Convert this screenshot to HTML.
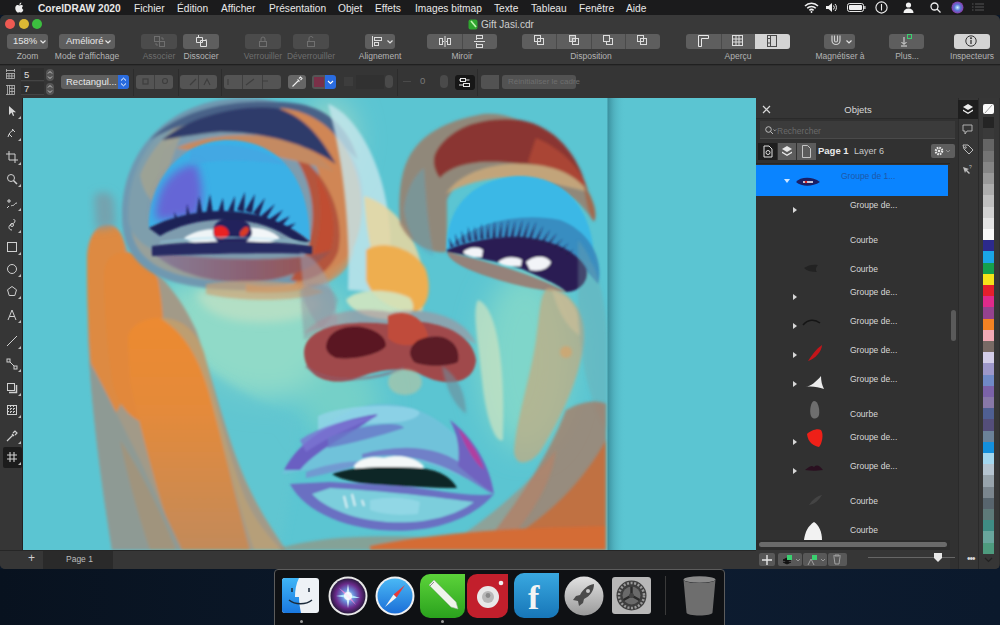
<!DOCTYPE html>
<html><head><meta charset="utf-8">
<style>
*{margin:0;padding:0;box-sizing:border-box}
html,body{width:1000px;height:625px;overflow:hidden;background:#0b1829;font-family:"Liberation Sans",sans-serif;}
.a{position:absolute}
#menubar{left:0;top:0;width:1000px;height:15px;background:#1b1b1c;color:#e8e8e8;font-size:10.2px;}
#menubar span{position:absolute;top:2.6px;white-space:nowrap}
#win{left:0;top:15px;width:1000px;height:554px;background:#2e2e2e;border-radius:6px 6px 5px 5px;overflow:hidden}
#toolbar{left:0;top:0;width:1000px;height:50px;background:#393939;border-bottom:1px solid #202020}
.btn{position:absolute;top:19px;height:15px;background:#5e5e5e;border-radius:3px}
.lbl{position:absolute;top:36px;font-size:8.5px;color:#b4b4b4;white-space:nowrap;text-align:center}
.dis{background:#4b4b4b}
#propbar{left:0;top:51px;width:1000px;height:32px;background:#353535}
#toolbox{left:0;top:83px;width:23px;height:452px;background:#363636}
#canvas{left:23px;top:83px;width:733px;height:452px;background:#5cc5d2;overflow:hidden}
#pagebar{left:0;top:535px;width:756px;height:19px;background:#363636}
#panel{left:756px;top:83px;width:202px;height:471px;background:#313131}
#strip{left:958px;top:83px;width:21px;height:471px;background:#363636}
#palette{left:979px;top:83px;width:20px;height:471px;background:#363636}
.row{position:absolute;left:0;width:192px;height:29px}
.rt{position:absolute;font-size:8.5px;color:#dcdcdc;white-space:nowrap}
</style></head><body>
<div id="menubar" class="a">
<svg style="position:absolute;left:14px;top:2px" width="10" height="11" viewBox="0 0 170 200"><path fill="#eeeeee" d="M150 160c-8 17-12 25-22 40-14 21-34 47-59 47h0c-21 0-27-14-55-14S-13 247-34 247" transform="translate(0,-60)" opacity="0"/><path fill="#eeeeee" d="M140.6 106.3c-.2-23 18.8-34 19.6-34.6-10.7-15.6-27.3-17.8-33.2-18-14.1-1.4-27.6 8.3-34.7 8.3-7.2 0-18.2-8.1-30-7.9-15.4.2-29.7 9-37.6 22.8-16 27.8-4.1 69 11.5 91.6 7.6 11 16.7 23.4 28.6 23 11.5-.5 15.8-7.4 29.7-7.4 13.8 0 17.8 7.4 29.9 7.2 12.4-.2 20.2-11.2 27.7-22.3 8.8-12.8 12.4-25.2 12.6-25.9-.3-.1-24-9.2-24.1-36.8zM118.3 38.7c6.3-7.7 10.6-18.3 9.4-28.9-9.1.4-20.1 6-26.6 13.7-5.8 6.8-11 17.6-9.6 28 10.2.8 20.5-5.1 26.8-12.8z"/></svg>
<span style="left:38px;font-weight:bold">CorelDRAW 2020</span>
<span style="left:134px">Fichier</span>
<span style="left:177px">Édition</span>
<span style="left:221px">Afficher</span>
<span style="left:269px">Présentation</span>
<span style="left:338px">Objet</span>
<span style="left:375px">Effets</span>
<span style="left:415px">Images bitmap</span>
<span style="left:494px">Texte</span>
<span style="left:531px">Tableau</span>
<span style="left:579px">Fenêtre</span>
<span style="left:626px">Aide</span>
<svg style="position:absolute;left:804px;top:2px" width="15" height="11" viewBox="0 0 15 11" fill="none" stroke="#f0f0f0" stroke-width="1.5"><path d="M1 4a9 9 0 0 1 13 0M3.2 6.2a6 6 0 0 1 8.6 0M5.4 8.4a3 3 0 0 1 4.2 0"/><circle cx="7.5" cy="10" r="0.9" fill="#f0f0f0" stroke="none"/></svg>
<svg style="position:absolute;left:825px;top:2px" width="13" height="11" viewBox="0 0 13 11"><path d="M1 4h2.5L7 1v9L3.5 7H1z" fill="#f0f0f0"/><path d="M8.5 3.5a3 3 0 0 1 0 4M10 2a5 5 0 0 1 0 7" fill="none" stroke="#f0f0f0" stroke-width="1"/></svg>
<svg style="position:absolute;left:847px;top:3px" width="19" height="9" viewBox="0 0 19 9"><rect x="0.5" y="0.5" width="16" height="8" rx="2" fill="none" stroke="#e8e8e8" stroke-width="1"/><rect x="2" y="2" width="13" height="5" rx="1" fill="#f0f0f0"/><rect x="17.3" y="3" width="1.2" height="3" fill="#e8e8e8"/></svg>
<svg style="position:absolute;left:875px;top:1px" width="13" height="13" viewBox="0 0 13 13" fill="none" stroke="#f0f0f0" stroke-width="1.1"><circle cx="6.5" cy="6.5" r="5.6"/><path d="M6.5 3v6.5"/></svg>
<svg style="position:absolute;left:903px;top:2px" width="11" height="11" viewBox="0 0 11 11" fill="#f4f4f4"><circle cx="5.5" cy="3" r="2.6"/><path d="M0.5 11c0-3 2-4.5 5-4.5s5 1.5 5 4.5z"/></svg>
<svg style="position:absolute;left:930px;top:2px" width="11" height="11" viewBox="0 0 11 11" fill="none" stroke="#f0f0f0" stroke-width="1.3"><circle cx="4.5" cy="4.5" r="3.5"/><path d="M7 7l3.5 3.5"/></svg>
<svg style="position:absolute;left:951px;top:1px" width="13" height="13" viewBox="0 0 13 13"><defs><radialGradient id="siriM" cx="0.5" cy="0.5" r="0.5"><stop offset="0" stop-color="#d0f4ff"/><stop offset="0.5" stop-color="#5a7ad8"/><stop offset="1" stop-color="#8a3aa8"/></radialGradient></defs><circle cx="6.5" cy="6.5" r="6" fill="url(#siriM)"/></svg>
<svg style="position:absolute;left:972px;top:3px" width="12" height="10" viewBox="0 0 12 10" fill="none" stroke="#555" stroke-width="1"><path d="M3 1h9M3 4h9M3 7h9M0 1h1.5M0 4h1.5M0 7h1.5"/></svg>
</div>
<div id="win" class="a">
 <div id="toolbar" class="a">
  <div class="a" style="left:5px;top:4px;width:10px;height:10px;border-radius:50%;background:#ee5a52"></div>
  <div class="a" style="left:19px;top:4px;width:10px;height:10px;border-radius:50%;background:#dcb834"></div>
  <div class="a" style="left:32px;top:4px;width:10px;height:10px;border-radius:50%;background:#3cbf3f"></div>
  <svg class="a" style="left:468px;top:4px" width="10" height="11" viewBox="0 0 10 11"><rect x="0.5" y="0.5" width="9" height="10" rx="2" fill="#2fa52f"/><path d="M3 2 L8 8" stroke="#bff5b0" stroke-width="1.6"/></svg>
  <div class="a" style="left:481px;top:4px;font-size:10px;color:#cfcfcf">Gift Jasi.cdr</div>
  <!-- zoom -->
  <div class="btn" style="left:7px;width:41px;color:#e6e6e6;font-size:9.5px;padding:1px 0 0 6px">158%<svg style="position:absolute;left:33px;top:6px" width="6" height="4" viewBox="0 0 6 4" fill="none" stroke="#e6e6e6" stroke-width="1.2"><path d="M0.5 0.5L3 3L5.5 0.5"/></svg></div>
  <div class="lbl" style="left:7px;width:41px">Zoom</div>
  <div class="btn" style="left:59px;width:56px;color:#e6e6e6;font-size:9.5px;padding:1px 0 0 7px">Amélioré<svg style="position:absolute;left:46px;top:6px" width="6" height="4" viewBox="0 0 6 4" fill="none" stroke="#e6e6e6" stroke-width="1.2"><path d="M0.5 0.5L3 3L5.5 0.5"/></svg></div>
  <div class="lbl" style="left:52px;width:70px">Mode d'affichage</div>
  <div class="btn dis" style="left:141px;width:36px"></div>
  <div class="lbl" style="left:141px;width:36px;color:#6e6e6e">Associer</div>
  <div class="btn" style="left:183px;width:36px"></div>
  <div class="lbl" style="left:179px;width:44px">Dissocier</div>
  <div class="btn dis" style="left:245px;width:36px"></div>
  <div class="lbl" style="left:240px;width:46px;color:#6e6e6e">Verrouiller</div>
  <div class="btn dis" style="left:293px;width:36px"></div>
  <div class="lbl" style="left:285px;width:52px;color:#6e6e6e">Déverrouiller</div>
  <div class="btn" style="left:365px;width:30px"></div>
  <div class="lbl" style="left:350px;width:60px">Alignement</div>
  <div class="btn" style="left:427px;width:70px"></div>
  <div class="a" style="left:462px;top:19px;width:1px;height:15px;background:#4a4a4a"></div>
  <div class="lbl" style="left:427px;width:70px">Miroir</div>
  <div class="btn" style="left:522px;width:138px"></div>
  <div class="a" style="left:556px;top:19px;width:1px;height:15px;background:#4a4a4a"></div>
  <div class="a" style="left:591px;top:19px;width:1px;height:15px;background:#4a4a4a"></div>
  <div class="a" style="left:625px;top:19px;width:1px;height:15px;background:#4a4a4a"></div>
  <div class="lbl" style="left:522px;width:138px">Disposition</div>
  <div class="btn" style="left:686px;width:104px"></div>
  <div class="a" style="left:721px;top:19px;width:1px;height:15px;background:#4a4a4a"></div>
  <div class="a" style="left:755px;top:19px;width:35px;height:15px;background:#d4d4d4;border-radius:0 3px 3px 0"></div>
  <div class="lbl" style="left:686px;width:104px">Aperçu</div>
  <div class="btn" style="left:824px;width:31px"></div>
  <div class="lbl" style="left:805px;width:70px">Magnétiser à</div>
  <div class="btn" style="left:889px;width:35px"></div>
  <div class="lbl" style="left:880px;width:54px">Plus...</div>
  <div class="btn" style="left:954px;width:36px;background:#d4d4d4"></div>
  <div class="lbl" style="left:940px;width:64px">Inspecteurs</div>
  <svg class="a" style="left:154px;top:21px" width="11" height="11" viewBox="0 0 11 11" fill="none" stroke="#6f6f6f" stroke-width="1"><rect x="0.5" y="0.5" width="5" height="5"/><rect x="5.5" y="5.5" width="5" height="5"/><path d="M2 7v2h2M7 2h2v2"/></svg>
  <svg class="a" style="left:196px;top:20px" width="12" height="12" viewBox="0 0 12 12" fill="none" stroke="#e0e0e0" stroke-width="1"><path d="M0.5 2.5h6v5h-6z M4.5 5.5h6v6h-6z M2.5 0v2 M10 4v1.5"/></svg>
  <svg class="a" style="left:258px;top:21px" width="10" height="11" viewBox="0 0 10 11" fill="none" stroke="#707070" stroke-width="1"><rect x="1.5" y="5.5" width="7" height="5"/><path d="M3 5V3a2 2 0 0 1 4 0v2"/></svg>
  <svg class="a" style="left:306px;top:21px" width="10" height="11" viewBox="0 0 10 11" fill="none" stroke="#707070" stroke-width="1"><rect x="1.5" y="5.5" width="7" height="5"/><path d="M3 5V3a2 2 0 0 1 4 -1"/></svg>
  <svg class="a" style="left:371px;top:21px" width="12" height="11" viewBox="0 0 12 11" fill="none" stroke="#dcdcdc" stroke-width="1"><path d="M1.5 0v11"/><rect x="3.5" y="1.5" width="7" height="3"/><rect x="3.5" y="6.5" width="4" height="3"/></svg>
  <svg class="a" style="left:387px;top:25px" width="6" height="4" viewBox="0 0 6 4" fill="none" stroke="#e0e0e0" stroke-width="1.2"><path d="M0.5 0.5L3 3L5.5 0.5"/></svg>
  <svg class="a" style="left:439px;top:21px" width="12" height="11" viewBox="0 0 12 11" fill="none" stroke="#dcdcdc" stroke-width="1"><path d="M6 0v11"/><rect x="0.5" y="2.5" width="3" height="6"/><rect x="8.5" y="2.5" width="3" height="6"/><path d="M4 5.5h1M7 5.5h1"/></svg>
  <svg class="a" style="left:474px;top:20px" width="11" height="13" viewBox="0 0 11 13" fill="none" stroke="#dcdcdc" stroke-width="1"><path d="M0 6.5h11"/><rect x="2.5" y="0.5" width="6" height="3"/><rect x="2.5" y="9.5" width="6" height="3"/><path d="M2.5 4v1M2.5 8v1"/></svg>
  <svg class="a" style="left:534px;top:20px" width="11" height="11" viewBox="0 0 11 11" fill="none" stroke="#dcdcdc" stroke-width="1"><rect x="0.5" y="0.5" width="6" height="6"/><rect x="3.5" y="3.5" width="6" height="6"/></svg>
  <svg class="a" style="left:569px;top:20px" width="11" height="11" viewBox="0 0 11 11" fill="none" stroke="#dcdcdc" stroke-width="1"><rect x="0.5" y="0.5" width="6" height="6" fill="#8a8a8a"/><rect x="3.5" y="3.5" width="6" height="6"/></svg>
  <svg class="a" style="left:603px;top:20px" width="11" height="11" viewBox="0 0 11 11" fill="none" stroke="#dcdcdc" stroke-width="1"><rect x="3.5" y="3.5" width="6" height="6"/><rect x="0.5" y="0.5" width="6" height="6" fill="#5e5e5e"/></svg>
  <svg class="a" style="left:637px;top:20px" width="11" height="11" viewBox="0 0 11 11" fill="none" stroke="#dcdcdc" stroke-width="1"><rect x="3.5" y="3.5" width="6" height="6" fill="#5e5e5e"/><rect x="0.5" y="0.5" width="6" height="6"/></svg>
  <svg class="a" style="left:698px;top:20px" width="11" height="12" viewBox="0 0 11 12" fill="none" stroke="#e8e8e8" stroke-width="1"><path d="M0.5 11.5V0.5h10v3h-7v8z"/></svg>
  <svg class="a" style="left:732px;top:20px" width="11" height="11" viewBox="0 0 11 11" fill="none" stroke="#e0e0e0" stroke-width="1"><rect x="0.5" y="0.5" width="10" height="10"/><path d="M4 0v11M7 0v11M0 4h11M0 7h11"/></svg>
  <svg class="a" style="left:767px;top:20px" width="10" height="12" viewBox="0 0 10 12" fill="none" stroke="#4a4a4a" stroke-width="1"><rect x="0.5" y="0.5" width="9" height="11"/><path d="M3.5 0v12M0 3.5h3M0 8h3"/></svg>
  <svg class="a" style="left:830px;top:20px" width="12" height="11" viewBox="0 0 12 11" fill="none" stroke="#cfcfcf" stroke-width="1.2"><path d="M2 0.5v5a4 4 0 0 0 8 0v-5M4.5 0.5v5a1.5 1.5 0 0 0 3 0v-5"/></svg>
  <svg class="a" style="left:846px;top:25px" width="6" height="4" viewBox="0 0 6 4" fill="none" stroke="#e0e0e0" stroke-width="1.2"><path d="M0.5 0.5L3 3L5.5 0.5"/></svg>
  <svg class="a" style="left:900px;top:19px" width="13" height="13" viewBox="0 0 13 13" fill="none" stroke-width="1"><path d="M4 3v7M1.5 8l2.5 2.5L6.5 8M1 12h6" stroke="#e0e0e0"/><rect x="7.5" y="0.5" width="4" height="4" stroke="#3cd070"/></svg>
  <svg class="a" style="left:965px;top:20px" width="12" height="12" viewBox="0 0 12 12" fill="none" stroke="#333" stroke-width="1"><circle cx="6" cy="6" r="5.2"/><path d="M6 5v4" stroke-width="1.3"/><circle cx="6" cy="3.2" r="0.6" fill="#333"/></svg>
 </div>
 <div id="propbar" class="a">
  <svg class="a" style="left:6px;top:3px" width="9" height="10" viewBox="0 0 9 10" fill="none" stroke="#bdbdbd" stroke-width="0.8"><path d="M0.5 1.5h8M0.5 0v3M8.5 0v3"/><rect x="0.5" y="4.5" width="8" height="5"/><path d="M3 4.5v5M5.8 4.5v5M0.5 7h8"/></svg>
  <svg class="a" style="left:6px;top:19px" width="9" height="10" viewBox="0 0 9 10" fill="none" stroke="#bdbdbd" stroke-width="0.8"><path d="M1.5 0.5v9M0 0.5h3M0 9.5h3"/><rect x="3.5" y="0.5" width="5" height="9"/><path d="M3.5 3.5h5M3.5 6.5h5M6 0.5v9"/></svg>
  <div class="a" style="left:21px;top:2px;width:23px;height:13px;background:#2f2f2f;border-bottom:1px solid #444;color:#e0e0e0;font-size:9.5px;padding:1px 0 0 3px">5</div>
  <div class="a" style="left:21px;top:16px;width:23px;height:13px;background:#2f2f2f;border-bottom:1px solid #444;color:#e0e0e0;font-size:9.5px;padding:1px 0 0 3px">7</div>
  <div class="a" style="left:46px;top:3px;width:8px;height:12px;background:#555;border-radius:4px"></div>
  <div class="a" style="left:46px;top:17px;width:8px;height:12px;background:#555;border-radius:4px"></div>
  <svg class="a" style="left:47px;top:4px" width="6" height="10" viewBox="0 0 6 10" fill="none" stroke="#cfcfcf" stroke-width="0.9"><path d="M1 3.5L3 1.5L5 3.5M1 6.5L3 8.5L5 6.5"/></svg>
  <svg class="a" style="left:47px;top:18px" width="6" height="10" viewBox="0 0 6 10" fill="none" stroke="#cfcfcf" stroke-width="0.9"><path d="M1 3.5L3 1.5L5 3.5M1 6.5L3 8.5L5 6.5"/></svg>
  <div class="a" style="left:61px;top:9px;width:68px;height:14px;background:#5f5f5f;border-radius:3px;color:#e8e8e8;font-size:9.5px;padding:1px 0 0 5px;white-space:nowrap">Rectangul...</div>
  <div class="a" style="left:118px;top:9px;width:11px;height:14px;background:#2a6ce0;border-radius:0 3px 3px 0"></div>
  <svg class="a" style="left:120px;top:11px" width="7" height="10" viewBox="0 0 7 10" fill="none" stroke="#fff" stroke-width="1"><path d="M1 3.5L3.5 1.2L6 3.5M1 6.5L3.5 8.8L6 6.5"/></svg>
  <div class="a" style="left:133px;top:3px;width:1px;height:27px;background:#2c2c2c"></div>
  <div class="a" style="left:136px;top:9px;width:37px;height:14px;background:#545454;border-radius:3px"></div>
  <div class="a" style="left:154px;top:9px;width:1px;height:14px;background:#404040"></div>
  <div class="a" style="left:178px;top:3px;width:1px;height:27px;background:#2c2c2c"></div>
  <div class="a" style="left:180px;top:9px;width:37px;height:14px;background:#545454;border-radius:3px"></div>
  <div class="a" style="left:198px;top:9px;width:1px;height:14px;background:#404040"></div>
  <div class="a" style="left:221px;top:3px;width:1px;height:27px;background:#2c2c2c"></div>
  <div class="a" style="left:224px;top:9px;width:57px;height:14px;background:#545454;border-radius:3px"></div>
  <div class="a" style="left:242px;top:9px;width:1px;height:14px;background:#404040"></div>
  <div class="a" style="left:262px;top:9px;width:1px;height:14px;background:#404040"></div>
  <svg class="a" style="left:140px;top:11px" width="130" height="10" viewBox="0 0 130 10" fill="none" stroke="#3e3e3e" stroke-width="1.2"><rect x="3" y="2" width="5" height="5"/><circle cx="25" cy="4" r="2.5"/><path d="M50 8L56 2M64 8l3-6 3 6M88 2v6M106 8l8-6M122 4h6"/></svg>
  <div class="a" style="left:288px;top:9px;width:18px;height:14px;background:#666;border-radius:3px"></div>
  <svg class="a" style="left:291px;top:10px" width="12" height="12" viewBox="0 0 12 12" fill="none" stroke="#eee" stroke-width="1.1"><path d="M1.5 10.5L7.5 4.5M8 2.5l1.5 -1.5l1.5 1.5l-1.5 1.5M6.5 3.5l2 2"/></svg>
  <div class="a" style="left:312px;top:9px;width:13px;height:14px;background:#555;border-radius:3px 0 0 3px"></div>
  <div class="a" style="left:314px;top:11px;width:10px;height:10px;background:#7a3048"></div>
  <div class="a" style="left:325px;top:9px;width:11px;height:14px;background:#2a6ce0;border-radius:0 3px 3px 0"></div>
  <svg class="a" style="left:327px;top:14px" width="7" height="5" viewBox="0 0 7 5" fill="none" stroke="#fff" stroke-width="1.1"><path d="M1 1L3.5 3.5L6 1"/></svg>
  <div class="a" style="left:344px;top:11px;width:9px;height:9px;background:#3d3d3d"></div>
  <div class="a" style="left:356px;top:9px;width:28px;height:14px;background:#313131"></div>
  <div class="a" style="left:385px;top:9px;width:8px;height:13px;background:#4a4a4a;border-radius:4px"></div>
  <div class="a" style="left:397px;top:3px;width:1px;height:27px;background:#2c2c2c"></div>
  <div class="a" style="left:403px;top:15px;width:8px;height:1px;background:#4a4a4a"></div>
  <div class="a" style="left:420px;top:9px;font-size:9.5px;color:#7a7a7a">0</div>
  <div class="a" style="left:440px;top:9px;width:8px;height:13px;background:#4a4a4a;border-radius:4px"></div>
  <div class="a" style="left:455px;top:9px;width:20px;height:15px;background:#171717;border-radius:3px"></div>
  <svg class="a" style="left:459px;top:11px" width="12" height="11" viewBox="0 0 12 11" fill="none" stroke="#e8e8e8" stroke-width="1"><rect x="1.5" y="1.5" width="5" height="3"/><rect x="4.5" y="6.5" width="6" height="3"/><path d="M0 3h1.5M6.5 3h4M0 8h4.5"/></svg>
  <div class="a" style="left:477px;top:3px;width:1px;height:27px;background:#2c2c2c"></div>
  <div class="a" style="left:481px;top:9px;width:18px;height:14px;background:#525252;border-radius:3px 0 0 3px"></div>
  <div class="a" style="left:502px;top:9px;width:74px;height:14px;background:#525252;border-radius:3px;font-size:8px;color:#6e6e6e;padding:2px 0 0 6px;white-space:nowrap">Réinitialiser le cadre</div>
 </div>
 <div id="toolbox" class="a">
<div class="a" style="left:3px;top:349px;width:19px;height:21px;background:#1c1c1c;border-radius:2px"></div>
<svg class="a" style="left:6px;top:7px" width="12" height="12" viewBox="0 0 12 12" fill="none" stroke="#d0d0d0" stroke-width="1"><path d="M3 1v9l2.5-2.5L7 11l1.2-.6L6.8 7.2H10z" fill="#d8d8d8" stroke="none"/></svg>
<div class="a" style="left:18px;top:18px;width:0;height:0;border-left:3px solid transparent;border-bottom:3px solid #bbb"></div>
<svg class="a" style="left:6px;top:29px" width="12" height="12" viewBox="0 0 12 12" fill="none" stroke="#d0d0d0" stroke-width="1"><path d="M2 10c1-4 3-6 6-7M6 2l3 3M3 7l3 3" /></svg>
<div class="a" style="left:18px;top:40px;width:0;height:0;border-left:3px solid transparent;border-bottom:3px solid #bbb"></div>
<svg class="a" style="left:6px;top:53px" width="12" height="12" viewBox="0 0 12 12" fill="none" stroke="#d0d0d0" stroke-width="1"><path d="M3 0v9h9M0 3h9v9" /></svg>
<div class="a" style="left:18px;top:64px;width:0;height:0;border-left:3px solid transparent;border-bottom:3px solid #bbb"></div>
<svg class="a" style="left:6px;top:75px" width="12" height="12" viewBox="0 0 12 12" fill="none" stroke="#d0d0d0" stroke-width="1"><circle cx="5" cy="5" r="3.5"/><path d="M7.5 7.5l3.5 3.5" stroke-width="1.5"/></svg>
<div class="a" style="left:18px;top:86px;width:0;height:0;border-left:3px solid transparent;border-bottom:3px solid #bbb"></div>
<svg class="a" style="left:6px;top:99px" width="12" height="12" viewBox="0 0 12 12" fill="none" stroke="#d0d0d0" stroke-width="1"><path d="M1 11l2-2M3 2v4M1 4h4M5 9c1-1 2 0 3-1s1-2 3-2" /></svg>
<div class="a" style="left:18px;top:110px;width:0;height:0;border-left:3px solid transparent;border-bottom:3px solid #bbb"></div>
<svg class="a" style="left:6px;top:121px" width="12" height="12" viewBox="0 0 12 12" fill="none" stroke="#d0d0d0" stroke-width="1"><path d="M6 11c-3 0-4-3-2-5s5-1 5-4c0-1-1-2-2-2" /><circle cx="6" cy="6" r="1.5"/></svg>
<div class="a" style="left:18px;top:132px;width:0;height:0;border-left:3px solid transparent;border-bottom:3px solid #bbb"></div>
<svg class="a" style="left:6px;top:143px" width="12" height="12" viewBox="0 0 12 12" fill="none" stroke="#d0d0d0" stroke-width="1"><rect x="1.5" y="1.5" width="9" height="9"/></svg>
<div class="a" style="left:18px;top:154px;width:0;height:0;border-left:3px solid transparent;border-bottom:3px solid #bbb"></div>
<svg class="a" style="left:6px;top:165px" width="12" height="12" viewBox="0 0 12 12" fill="none" stroke="#d0d0d0" stroke-width="1"><circle cx="6" cy="6" r="4.5"/></svg>
<div class="a" style="left:18px;top:176px;width:0;height:0;border-left:3px solid transparent;border-bottom:3px solid #bbb"></div>
<svg class="a" style="left:6px;top:187px" width="12" height="12" viewBox="0 0 12 12" fill="none" stroke="#d0d0d0" stroke-width="1"><path d="M6 1.5l4.5 3.3-1.7 5.7H3.2L1.5 4.8z"/></svg>
<div class="a" style="left:18px;top:198px;width:0;height:0;border-left:3px solid transparent;border-bottom:3px solid #bbb"></div>
<svg class="a" style="left:6px;top:211px" width="12" height="12" viewBox="0 0 12 12" fill="none" stroke="#d0d0d0" stroke-width="1"><path d="M2 11L6 1l4 10M3.5 7.5h5" /></svg>
<div class="a" style="left:18px;top:222px;width:0;height:0;border-left:3px solid transparent;border-bottom:3px solid #bbb"></div>
<svg class="a" style="left:6px;top:237px" width="12" height="12" viewBox="0 0 12 12" fill="none" stroke="#d0d0d0" stroke-width="1"><path d="M1 11L11 1" /></svg>
<div class="a" style="left:18px;top:248px;width:0;height:0;border-left:3px solid transparent;border-bottom:3px solid #bbb"></div>
<svg class="a" style="left:6px;top:260px" width="12" height="12" viewBox="0 0 12 12" fill="none" stroke="#d0d0d0" stroke-width="1"><rect x="1" y="1" width="3" height="3"/><rect x="8" y="8" width="3" height="3"/><path d="M4 4l4 4"/></svg>
<div class="a" style="left:18px;top:271px;width:0;height:0;border-left:3px solid transparent;border-bottom:3px solid #bbb"></div>
<svg class="a" style="left:6px;top:284px" width="12" height="12" viewBox="0 0 12 12" fill="none" stroke="#d0d0d0" stroke-width="1"><rect x="1.5" y="1.5" width="7" height="7"/><path d="M10.5 3v7.5H3" stroke-width="1.5"/></svg>
<div class="a" style="left:18px;top:295px;width:0;height:0;border-left:3px solid transparent;border-bottom:3px solid #bbb"></div>
<svg class="a" style="left:6px;top:306px" width="12" height="12" viewBox="0 0 12 12" fill="none" stroke="#d0d0d0" stroke-width="1"><rect x="1.5" y="1.5" width="9" height="9"/><path d="M1.5 4.5h9M1.5 7.5h9M4.5 1.5v9M7.5 1.5v9" stroke-dasharray="1.5 1.5"/></svg>
<div class="a" style="left:18px;top:317px;width:0;height:0;border-left:3px solid transparent;border-bottom:3px solid #bbb"></div>
<svg class="a" style="left:6px;top:332px" width="12" height="12" viewBox="0 0 12 12" fill="none" stroke="#d0d0d0" stroke-width="1"><path d="M1 11l6-6M7 3l2-2 2 2-2 2M6 4l2 2" stroke-width="1.2"/></svg>
<div class="a" style="left:18px;top:343px;width:0;height:0;border-left:3px solid transparent;border-bottom:3px solid #bbb"></div>
<svg class="a" style="left:6px;top:353px" width="12" height="12" viewBox="0 0 12 12" fill="none" stroke="#d0d0d0" stroke-width="1"><path d="M4 1v10M8 1v10M1 4h10M1 8h10" stroke-width="1.1"/></svg>
<div class="a" style="left:18px;top:364px;width:0;height:0;border-left:3px solid transparent;border-bottom:3px solid #bbb"></div>

<div class="a" style="left:22px;top:0;width:1px;height:452px;background:#222"></div>
</div>
 <div id="canvas" class="a"><svg class="a" style="left:0;top:0" width="733" height="452" viewBox="23 98 733 452">
<defs>
 <filter id="b1" x="-20%" y="-20%" width="140%" height="140%"><feGaussianBlur stdDeviation="0.8"/></filter>
 <filter id="b2" x="-20%" y="-20%" width="140%" height="140%"><feGaussianBlur stdDeviation="1.6"/></filter>
 <filter id="b4" x="-30%" y="-30%" width="160%" height="160%"><feGaussianBlur stdDeviation="4"/></filter>
 <filter id="b8" x="-50%" y="-50%" width="200%" height="200%"><feGaussianBlur stdDeviation="14"/></filter>
 <linearGradient id="shadow" x1="0" x2="1"><stop offset="0" stop-color="#3a8e9c" stop-opacity="1"/><stop offset="0.35" stop-color="#4aa8b6" stop-opacity="0.7"/><stop offset="1" stop-color="#5bc5d2" stop-opacity="0"/></linearGradient>
 <linearGradient id="under1" x1="0" x2="1"><stop offset="0" stop-color="#86809a"/><stop offset="0.55" stop-color="#8a6072"/><stop offset="1" stop-color="#9e5248"/></linearGradient>
 <linearGradient id="orblob" x1="0" y1="0" x2="0" y2="1"><stop offset="0" stop-color="#ec8a30"/><stop offset="0.4" stop-color="#e48a3a"/><stop offset="1" stop-color="#c28a5a"/></linearGradient>
 <linearGradient id="orcol" x1="0" y1="0" x2="0.3" y2="1"><stop offset="0" stop-color="#ec8a2e"/><stop offset="1" stop-color="#d88a44"/></linearGradient>
</defs>
<rect x="23" y="98" width="733" height="452" fill="#5bc5d2"/>
<!-- page shadow -->
<rect x="607.5" y="98" width="18" height="452" fill="url(#shadow)"/>

<!-- face base mint -->
<g filter="url(#b8)">
 <path d="M160 290 C200 270 300 270 340 300 C350 340 330 390 280 400 C230 405 190 380 170 350 Z" fill="#90dac8"/>
 <ellipse cx="340" cy="400" rx="40" ry="40" fill="#74d0c8"/>
 <ellipse cx="525" cy="360" rx="45" ry="90" fill="#7fd6ca"/>
 <ellipse cx="330" cy="140" rx="25" ry="40" fill="#9ad6c8"/>
</g>

<g filter="url(#b4)">
 <path d="M196 292 C230 286 290 290 322 300 C318 316 290 324 250 322 C220 320 200 310 196 292 Z" fill="#bfe0c4" opacity="0.75"/>
 <path d="M196 360 C220 380 250 400 300 420 C300 460 290 500 280 550 L240 550 C230 480 215 410 196 360 Z" fill="#62c6d0" opacity="0.7"/>
</g>
<!-- orange left column -->
<g filter="url(#b2)">
 <path d="M87 260 C87 236 96 224 108 224 C118 224 124 236 128 252 C150 262 178 290 196 330 C214 380 226 440 250 490 C262 515 276 535 286 550 L112 550 C104 500 92 420 88 340 Z" fill="#a29a88"/>
 <path d="M87 262 C87 238 96 225 107 225 C120 225 126 240 126 262 L126 380 C124 410 110 424 100 420 C92 400 87 330 87 262 Z" fill="#dd8a42"/>
 <path d="M104 276 C104 258 114 252 126 252 C140 252 152 262 158 280 C166 320 166 380 160 420 C150 430 120 420 112 380 C106 340 104 300 104 276 Z" fill="#e2883a"/>
 <path d="M128 340 C128 326 144 318 160 318 C180 318 196 330 202 350 C212 400 228 470 250 550 L176 550 C160 500 140 430 130 380 Z" fill="url(#orblob)"/>
 <path d="M160 318 C180 318 196 330 204 352 C214 390 226 450 246 500 C258 525 272 540 282 550 L254 550 C236 500 222 440 208 390 C196 350 180 330 160 318 Z" fill="#b8a078" opacity="0.9"/>
 <path d="M89 360 C100 380 120 420 140 460 C156 495 170 525 182 550 L112 550 C104 500 94 430 89 360 Z" fill="#8e9a94"/>
 <path d="M120 440 C140 470 160 510 176 550 L150 550 C140 520 128 480 120 440 Z" fill="#a89274" opacity="0.7"/>
 
</g>

<g filter="url(#b4)"><path d="M94 196 C100 190 110 190 114 200 L116 226 L96 230 Z" fill="#7a9aa6" opacity="0.8"/></g>
<!-- left eye socket ring -->
<g filter="url(#b2)">
 <path d="M122 220 C120 150 170 100 240 98 C306 96 362 140 363 196 C364 252 322 290 238 290 C166 288 124 272 122 220 Z" fill="#6f98b0"/>
 <path d="M130 220 C128 156 174 108 240 106 C300 104 352 144 354 196 C356 248 318 282 238 282 C172 280 132 266 130 220 Z" fill="#98a09a"/>
 <path d="M140 220 C138 162 180 118 240 116 C296 114 342 150 344 198 C346 244 312 274 238 274 C178 272 142 260 140 220 Z" fill="#7e9cae"/>
 <path d="M128 216 C128 170 150 135 180 118 C160 150 150 190 154 250 C140 244 128 232 128 216 Z" fill="#7e9eac"/>
 <path d="M140 175 C150 150 170 128 190 118 C175 145 165 175 160 210 C150 200 142 190 140 175 Z" fill="#a4a290" opacity="0.8"/>
 <path d="M150 140 C180 108 240 96 300 104 C330 110 350 130 358 160 C330 130 290 115 240 116 C200 118 170 128 150 140 Z" fill="#4a6288"/>
 <path d="M280 108 C330 112 362 156 362 210 C360 258 330 290 290 288 C330 250 336 180 300 140 C294 128 288 118 280 108 Z" fill="#d08654"/>
 <path d="M290 150 C326 170 346 214 338 252 C328 276 306 284 290 280 C318 244 322 192 290 150 Z" fill="#b4553c"/>
 <path d="M316 176 C332 196 338 226 330 252 C322 262 316 262 312 258 C322 232 322 204 316 176 Z" fill="#c44c2c" opacity="0.7"/>
 <path d="M176 148 C210 132 270 130 302 146 C318 154 328 164 334 172 C300 160 250 150 210 150 C196 150 186 151 176 148 Z" fill="#c48a62"/>
 <path d="M162 140 C190 116 240 104 276 108 C300 114 318 132 336 164 C310 146 270 132 220 132 C196 134 176 138 162 140 Z" fill="#2e3a6a"/>
 <path d="M150 250 C190 292 292 294 332 250 C300 262 210 262 150 250 Z" fill="url(#under1)"/>
 <path d="M246 284 C290 292 334 276 354 248 C350 282 312 296 246 292 Z" fill="#c89060" opacity="0.85"/>
</g>
<!-- left eyelid -->
<g filter="url(#b1)">
 <path d="M149 228 C148 180 182 140 228 140 C274 140 310 172 310 242 C280 214 200 208 149 228 Z" fill="#3ab0e6"/>
 </g><g filter="url(#b4)"><path d="M156 220 C154 196 166 168 196 164 C204 186 204 206 196 216 C180 218 168 220 156 220 Z" fill="#6a5ed4" opacity="0.9"/></g><g filter="url(#b1)">
 <path d="M190 150 C220 140 260 145 285 165 C260 160 220 158 190 165 Z" fill="#4aa0e0" opacity="0.5"/>
</g>
<!-- left eye -->
<g filter="url(#b1)">
 <path d="M184 238 C196 230 210 228 220 230 L222 244 C206 246 192 244 184 238 Z" fill="#eef4f6"/><path d="M244 228 C258 226 272 230 280 238 C268 244 254 246 244 244 Z" fill="#f2f6f8"/>
 <path d="M213 232 C213 222 222 218 232 218 C244 218 252 224 252 234 C248 243 240 246 232 246 C222 246 214 242 213 232 Z" fill="#24205c"/>
 <path d="M214 228 C220 224 228 226 229 234 C226 240 218 240 214 235 Z" fill="#ea2420"/>
 <path d="M240 232 C244 226 249 225 249 230 C247 236 243 238 240 236 Z" fill="#d83a26"/>
 <path d="M149 228 C190 206 262 200 310 242 C300 244 290 238 280 232 C240 212 190 218 160 236 Z" fill="#1e2056"/>
 <path d="M152 246 C200 240 270 240 312 246 L312 254 C270 252 200 254 152 256 Z" fill="#262a62"/>
 <path d="M160 242 C210 236 270 236 310 244" stroke="#9ad8ee" stroke-width="1.2" fill="none" opacity="0.7"/>
 <g fill="#1e2056">
  <path d="M196 218 L199 196 L203 216 Z"/><path d="M206 214 L210 194 L213 214 Z"/><path d="M218 212 L223 198 L224 212 Z"/>
  <path d="M228 211 L235 196 L234 212 Z"/><path d="M237 210 L245 192 L244 212 Z"/><path d="M245 211 L255 194 L252 213 Z"/>
  <path d="M253 213 L265 198 L259 216 Z"/><path d="M261 216 L275 204 L266 219 Z"/><path d="M268 220 L283 210 L273 224 Z"/>
  <path d="M275 224 L290 216 L280 228 Z"/><path d="M282 228 L296 223 L286 232 Z"/><path d="M186 222 L187 204 L191 220 Z"/><path d="M176 226 L174 212 L181 224 Z"/>
 </g>
</g>

<!-- nose bridge light -->
<g filter="url(#b2)">
 <path d="M328 104 C356 114 386 166 390 230 C392 262 386 282 378 292 L348 290 C350 240 346 170 328 104 Z" fill="#c4e6ec" opacity="0.8"/>
 <path d="M364 196 C392 204 420 232 426 290 L422 312 C396 310 370 290 364 196 Z" fill="#ead6a0" opacity="0.85"/>
 <path d="M366 250 C380 240 414 246 426 270 C432 290 428 306 416 312 C396 312 372 300 366 280 Z" fill="#eeae50"/>
 <path d="M346 300 C356 288 390 288 410 298 C418 310 410 318 396 320 C376 320 352 314 346 300 Z" fill="#d2e6c0" opacity="0.9"/>
 <path d="M300 252 C322 258 338 290 338 336 C326 340 312 320 304 300 Z" fill="#9aa0b0" opacity="0.55"/>
 <path d="M206 284 C240 278 300 280 324 292 C300 302 240 302 206 294 Z" fill="#d0a070" opacity="0.65"/>
</g>

<!-- right brow / socket -->
<g filter="url(#b2)">
 <path d="M408 159 C420 135 444 121 483 114 C520 110 560 140 585 185 L593 221 C580 200 556 178 500 174 C470 176 452 186 447 200 L447 252 C430 254 410 244 400 224 C398 198 400 175 408 159 Z" fill="#9c7a66" opacity="0.82"/>
 <path d="M404 210 C406 190 414 176 424 168 C426 200 428 230 434 256 C420 254 408 236 404 210 Z" fill="#5aa8c0" opacity="0.4"/>
 <path d="M436 152 C450 128 480 116 520 120 C556 126 578 156 586 186 C560 170 520 160 480 162 C460 164 446 170 440 178 C434 170 432 160 436 152 Z" fill="#8a3632"/>
 <path d="M536 138 C564 150 582 170 588 190 C570 180 550 170 528 162 Z" fill="#b24a34" opacity="0.8"/>
 <path d="M446 194 C456 178 480 166 510 164 C550 162 576 174 588 192 C560 184 530 178 500 178 C476 180 456 188 446 194 Z" fill="#c2a47a"/>
 <path d="M584 184 C594 200 598 214 594 222 C588 212 585 198 584 184 Z" fill="#a06a50"/>
</g>
<!-- right eyelid -->
<g filter="url(#b1)">
 <path d="M447 254 C444 210 470 180 516 176 C566 174 596 212 594 266 C560 240 490 236 447 254 Z" fill="#3ab8e6"/>
 <path d="M447 250 C470 222 520 212 560 220 C592 232 604 262 598 284 C582 264 560 246 520 240 C490 236 466 240 447 250 Z" fill="#3a88bc" opacity="0.9"/>
</g>
<!-- right eye -->
<g filter="url(#b1)">
 <path d="M447 250 C470 240 500 236 522 237 C552 240 576 250 586 268 C590 280 580 292 566 292 C560 285 540 277 522 269 C500 262 470 256 447 252 Z" fill="#2c1e52"/>
 <path d="M463 252 C468 247 478 246 483 250 L482 257 C474 258 466 256 463 252 Z" fill="#f2f4f8"/>
 <path d="M498 262 C504 256 516 256 522 260 L521 266 C512 267 502 266 498 262 Z" fill="#f2f4f8"/>
 <path d="M526 262 C534 255 546 255 551 262 C548 270 538 272 530 270 Z" fill="#f2f4f8"/>
 <path d="M447 252 C480 260 530 272 566 292 C540 292 500 282 470 270 C456 264 448 258 447 252 Z" fill="#9a7a70" opacity="0.9"/>
 <g fill="#221c4c">
  <path d="M450.8 247 L449.0 237.4 L453.2 247 Z"/>
  <path d="M456.8 245 L455.0 233.4 L459.2 245 Z"/>
  <path d="M462.8 243 L461.4 230.3 L465.2 243 Z"/>
  <path d="M468.8 241 L467.8 226.2 L471.2 241 Z"/>
  <path d="M474.8 240 L474.6 226.1 L477.2 240 Z"/>
  <path d="M480.8 239 L481.2 223.0 L483.2 239 Z"/>
  <path d="M486.8 238 L488.0 223.0 L489.2 238 Z"/>
  <path d="M492.8 238 L494.8 221.0 L495.2 238 Z"/>
  <path d="M498.8 237 L501.6 221.1 L501.2 237 Z"/>
  <path d="M504.8 237 L508.7 219.2 L507.2 237 Z"/>
  <path d="M510.8 237 L515.4 220.3 L513.2 237 Z"/>
  <path d="M516.8 238 L522.7 219.6 L519.2 238 Z"/>
  <path d="M522.8 238 L529.3 220.8 L525.2 238 Z"/>
  <path d="M528.8 239 L536.5 221.2 L531.2 239 Z"/>
  <path d="M534.8 241 L543.4 225.7 L537.2 241 Z"/>
  <path d="M540.8 243 L550.4 229.4 L543.2 243 Z"/>
  <path d="M546.8 245 L557.1 233.1 L549.2 245 Z"/>
  <path d="M552.8 248 L562.9 238.5 L555.2 248 Z"/>
  <path d="M558.8 251 L569.0 243.1 L561.2 251 Z"/>
  <path d="M564.8 255 L574.1 249.2 L567.2 255 Z"/>
 </g>
</g>

<!-- nose -->
<g filter="url(#b2)">
 <path d="M300 290 C314 278 332 284 338 300 C334 318 322 332 304 340 Z" fill="#8c8c98" opacity="0.45"/>
 <path d="M304 334 C320 314 350 306 390 312 C430 306 466 318 476 344 C452 332 420 326 390 330 C350 326 320 326 304 334 Z" fill="#a8909a" opacity="0.6"/>
</g>
<g filter="url(#b1)">
 <path d="M304 352 C306 326 346 320 388 324 C424 316 472 328 476 360 C474 386 444 386 424 376 C404 366 382 368 352 380 C324 386 304 374 304 352 Z" fill="#a04a4c"/>
 <path d="M388 316 C404 308 424 316 428 336 C418 348 398 348 388 338 Z" fill="#c04c3a"/>
 <path d="M326 346 C328 330 346 325 362 327 C376 330 386 336 386 346 C378 356 350 360 336 358 C329 355 326 351 326 346 Z" fill="#5a1824"/>
 <path d="M410 352 C412 340 426 335 442 337 C456 341 460 352 458 362 C448 367 424 367 414 362 C411 358 410 355 410 352 Z" fill="#5c1a26"/>
 <path d="M306 366 C330 388 380 378 404 368" stroke="#8a6070" stroke-width="3" fill="none" opacity="0.5"/>
</g>
<g filter="url(#b2)">
 <ellipse cx="405" cy="382" rx="17" ry="13" fill="#c4c49a" opacity="0.55"/>
 <path d="M442 366 C458 376 466 394 466 414 C454 404 446 390 442 366 Z" fill="#6e8a98" opacity="0.6"/>
</g>

<!-- right cheek strokes -->
<g filter="url(#b2)">
 <path d="M478 300 C496 306 506 360 503 440 C496 444 486 420 482 380 C478 340 472 310 478 300 Z" fill="#c8e2c2" opacity="0.75"/>
 <path d="M548 288 C570 290 586 312 584 340 C580 380 560 420 540 452 C530 464 516 468 514 452 C516 420 530 380 536 340 C540 312 540 292 548 288 Z" fill="#c4aa80" opacity="0.72"/>
 <path d="M552 290 C570 294 582 312 580 336 C572 330 560 320 552 290 Z" fill="#d0c098" opacity="0.6"/>
 <circle cx="566" cy="352" r="6" fill="#e0a060" opacity="0.6"/>
 <path d="M578 240 C596 260 607 300 607 340 L607 430 C592 410 582 370 578 320 Z" fill="#7aa4a8" opacity="0.32"/>
</g>
<g filter="url(#b2)">
 <path d="M566 410 C584 400 600 400 606 404 L606 550 L480 550 C520 500 548 456 566 410 Z" fill="#b07458" opacity="0.7"/>
 <path d="M606 440 C584 480 548 520 490 550 L606 550 Z" fill="#c86c38" opacity="0.85"/>
 <path d="M440 550 C480 524 520 494 556 450 C552 486 528 520 500 550 Z" fill="#c08060" opacity="0.5"/>
 <path d="M280 548 C320 536 380 534 440 538 L440 550 L280 550 Z" fill="#a08a70" opacity="0.6"/>
 <path d="M370 546 C430 534 500 528 606 526 L606 550 L370 550 Z" fill="#d46c34"/>
</g>

<!-- lips -->
<g filter="url(#b1)">
 <path d="M282 474 C300 440 340 406 378 404 C420 402 462 424 494 492 C470 480 440 466 420 462 L356 462 C330 466 300 471 282 474 Z" fill="#70c2da"/>
 <path d="M318 416 C340 406 380 404 410 408 C430 412 414 420 400 422 C370 424 340 424 318 430 Z" fill="#92d4e8" opacity="0.8"/>
 <path d="M284 470 C300 440 330 420 378 414 C360 430 320 446 300 470 Z" fill="#6a5ec2"/>
 <path d="M300 440 C320 426 350 418 378 416 C350 428 326 438 306 452 Z" fill="#7a74d2" opacity="0.8"/>
 <path d="M328 438 C360 424 400 420 404 428 C380 436 350 444 328 448 Z" fill="#6a78c8" opacity="0.8"/>
 <path d="M306 472 C330 462 360 460 370 462 C350 468 326 474 306 478 Z" fill="#7a88d0" opacity="0.7"/>
 <path d="M362 454 C400 444 440 444 470 470 C480 480 488 488 492 494 C470 480 440 460 400 456 C386 455 372 456 362 458 Z" fill="#7080c8"/>
 <path d="M450 420 C474 438 490 466 494 494 C482 486 470 476 458 466 C460 450 458 436 450 420 Z" fill="#7064c0"/>
 <path d="M458 428 C472 442 480 456 484 470 C474 462 466 448 458 428 Z" fill="#b040a0"/>
 <path d="M290 484 C316 536 444 552 494 494 C470 498 440 490 400 486 L330 482 Z" fill="#6a70c2"/>
 <path d="M312 494 C342 526 432 534 474 502 C440 498 400 492 330 488 Z" fill="#7ccedc"/>
 <path d="M344 496 L347 508 M352 494 L355 506 M362 500 L364 506" stroke="#d8f0f4" stroke-width="2"/>
 <path d="M370 500 C390 496 410 498 420 502 L418 514 C400 516 380 514 370 510 Z" fill="#9adce8" opacity="0.7"/>
 <path d="M354 466 C360 458 372 456 384 458 C396 455 412 455 424 466 L420 472 L356 472 Z" fill="#f4f8f8"/>
 <path d="M332 474 C350 467 380 466 420 468 C440 470 452 478 457 488 C430 488 400 486 370 484 C350 482 338 478 332 474 Z" fill="#0e2828"/>
</g>
</svg>
</div>
 <div id="pagebar" class="a">
  <div class="a" style="left:0;top:0;width:756px;height:1px;background:#262626"></div>
  <div class="a" style="left:43px;top:1px;width:70px;height:18px;background:#2a2a2a"></div>
  <div class="a" style="left:28px;top:1px;font-size:12px;color:#cfcfcf">+</div>
  <div class="a" style="left:66px;top:4px;font-size:8.5px;color:#bdbdbd">Page 1</div>
 </div>
 <div id="panel" class="a">
<div class="a" style="left:0;top:0;width:202px;height:21px;background:#353535;border-bottom:1px solid #2a2a2a"></div>
<svg class="a" style="left:6px;top:7px" width="9" height="9" viewBox="0 0 9 9" stroke="#d8d8d8" stroke-width="1.2"><path d="M1 1l7 7M8 1l-7 7"/></svg>
<div class="a" style="left:80px;top:6px;width:44px;text-align:center;font-size:9.5px;color:#d8d8d8">Objets</div>
<div class="a" style="left:4px;top:23px;width:195px;height:18px;background:#3b3b3b;border-bottom:1px solid #4a4a4a"></div>
<svg class="a" style="left:9px;top:28px" width="12" height="9" viewBox="0 0 12 9" fill="none" stroke="#bdbdbd" stroke-width="1"><circle cx="3.5" cy="3.5" r="2.8"/><path d="M5.5 5.5L8 8"/><path d="M8.5 3.5l1.3 1.3 1.3-1.3" stroke-width="0.8"/></svg>
<div class="a" style="left:21px;top:28px;font-size:8.5px;color:#6a6a6a">Rechercher</div>
<div class="a" style="left:2px;top:45px;width:19px;height:17px;background:#1e1e1e"></div>
<svg class="a" style="left:6px;top:47px" width="11" height="13" viewBox="0 0 11 13" fill="none" stroke="#e0e0e0" stroke-width="1"><path d="M2 1h5l3 3v8H2z"/><circle cx="6" cy="7.5" r="2"/></svg>
<div class="a" style="left:22px;top:45px;width:18px;height:17px;background:#5c5c5c"></div>
<svg class="a" style="left:25px;top:47px" width="12" height="12" viewBox="0 0 12 12" fill="#e8e8e8"><path d="M6 1l5 3-5 3-5-3z"/><path d="M1 6.5l5 3 5-3v1.5l-5 3-5-3z"/></svg>
<div class="a" style="left:41px;top:45px;width:19px;height:17px;background:#5c5c5c"></div>
<svg class="a" style="left:45px;top:47px" width="11" height="13" viewBox="0 0 11 13" fill="none" stroke="#d0d0d0" stroke-width="0.9"><path d="M1.5 0.5h5l3 3v9h-8z"/></svg>
<div class="a" style="left:62px;top:47px;font-size:9.5px;color:#eaeaea;font-weight:bold">Page 1</div>
<div class="a" style="left:98px;top:48px;font-size:9px;color:#c8c8c8">Layer 6</div>
<div class="a" style="left:175px;top:46px;width:24px;height:14px;background:#5e5e5e;border-radius:2px"></div>
<svg class="a" style="left:178px;top:48px" width="18" height="10" viewBox="0 0 18 10"><circle cx="5" cy="5" r="3.2" fill="none" stroke="#e8e8e8" stroke-width="2.2" stroke-dasharray="1.6 0.9"/><circle cx="5" cy="5" r="1.3" fill="#e8e8e8"/><path d="M12 4l2 2 2-2" fill="none" stroke="#9a9a9a" stroke-width="0.9"/></svg>
<div class="a" style="left:0;top:65px;width:194px;height:1px;background:#262626"></div>
<div class="a" style="left:0;top:67px;width:192px;height:31px;background:#0a84ff"></div>
<div class="a" style="left:85px;top:73px;font-size:8.5px;color:#1e57a8">Groupe de 1...</div>
<div class="a" style="left:28px;top:81px;width:0;height:0;border-left:3px solid transparent;border-right:3px solid transparent;border-top:4px solid #cfe6ff"></div>
<svg class="a" style="left:39px;top:78px" width="26" height="11" viewBox="0 0 26 11"><path d="M1 6c4-5 16-6 24 0-8 5-18 5-24 0z" fill="#1a1f66"/><path d="M8 6h10" stroke="#fff" stroke-width="1.3"/><circle cx="11" cy="6" r="1.2" fill="#e02020"/></svg>
<div class="a" style="left:94px;top:102px;font-size:8.5px;color:#d8d8d8">Groupe de...</div>
<div class="a" style="left:37px;top:109px;width:0;height:0;border-top:3px solid transparent;border-bottom:3px solid transparent;border-left:4px solid #d8d8d8"></div>
<div class="a" style="left:94px;top:137px;font-size:8.5px;color:#d8d8d8">Courbe</div>
<div class="a" style="left:94px;top:166px;font-size:8.5px;color:#d8d8d8">Courbe</div>
<div class="a" style="left:94px;top:189px;font-size:8.5px;color:#d8d8d8">Groupe de...</div>
<div class="a" style="left:37px;top:196px;width:0;height:0;border-top:3px solid transparent;border-bottom:3px solid transparent;border-left:4px solid #d8d8d8"></div>
<div class="a" style="left:94px;top:218px;font-size:8.5px;color:#d8d8d8">Groupe de...</div>
<div class="a" style="left:37px;top:225px;width:0;height:0;border-top:3px solid transparent;border-bottom:3px solid transparent;border-left:4px solid #d8d8d8"></div>
<div class="a" style="left:94px;top:247px;font-size:8.5px;color:#d8d8d8">Groupe de...</div>
<div class="a" style="left:37px;top:254px;width:0;height:0;border-top:3px solid transparent;border-bottom:3px solid transparent;border-left:4px solid #d8d8d8"></div>
<div class="a" style="left:94px;top:276px;font-size:8.5px;color:#d8d8d8">Groupe de...</div>
<div class="a" style="left:37px;top:283px;width:0;height:0;border-top:3px solid transparent;border-bottom:3px solid transparent;border-left:4px solid #d8d8d8"></div>
<div class="a" style="left:94px;top:311px;font-size:8.5px;color:#d8d8d8">Courbe</div>
<div class="a" style="left:94px;top:334px;font-size:8.5px;color:#d8d8d8">Groupe de...</div>
<div class="a" style="left:37px;top:341px;width:0;height:0;border-top:3px solid transparent;border-bottom:3px solid transparent;border-left:4px solid #d8d8d8"></div>
<div class="a" style="left:94px;top:363px;font-size:8.5px;color:#d8d8d8">Groupe de...</div>
<div class="a" style="left:37px;top:370px;width:0;height:0;border-top:3px solid transparent;border-bottom:3px solid transparent;border-left:4px solid #d8d8d8"></div>
<div class="a" style="left:94px;top:398px;font-size:8.5px;color:#d8d8d8">Courbe</div>
<div class="a" style="left:94px;top:427px;font-size:8.5px;color:#d8d8d8">Courbe</div>
<svg class="a" style="left:45px;top:164px" width="22" height="12" viewBox="0 0 22 12"><path d="M3 6c4-3 9-4 14-3-2 2-3 5-1 7-5 0-10-1-13-4z" fill="#222"/></svg>
<svg class="a" style="left:45px;top:218px" width="22" height="12" viewBox="0 0 22 12"><path d="M2 9c5-6 12-6 17-2" fill="none" stroke="#151515" stroke-width="1.6"/></svg>
<svg class="a" style="left:48px;top:245px" width="22" height="20" viewBox="0 0 22 20"><path d="M4 18c4-6 8-12 14-16 0 6-7 14-14 16z" fill="#c4151a"/></svg>
<svg class="a" style="left:47px;top:277px" width="24" height="16" viewBox="0 0 24 16"><path d="M2 12c6-1 11-5 16-11 0 5 1 9 3 13-6-2-12-3-19-2z" fill="#ececec"/></svg>
<svg class="a" style="left:50px;top:302px" width="20" height="22" viewBox="0 0 20 22"><path d="M8 1c4 0 6 8 5 14-1 4-6 5-8 1-2-5 0-15 3-15z" fill="#6e6e6e"/></svg>
<svg class="a" style="left:48px;top:330px" width="22" height="22" viewBox="0 0 22 22"><path d="M3 6c3-3 10-6 14-4 3 4 1 14-2 17-5-1-11-4-12-13z" fill="#ee2018"/></svg>
<svg class="a" style="left:47px;top:362px" width="24" height="14" viewBox="0 0 24 14"><path d="M2 10c3-2 6-6 9-3 3-3 6-1 9 3-7 1-12 1-18 0z" fill="#2a1020"/></svg>
<svg class="a" style="left:49px;top:395px" width="22" height="14" viewBox="0 0 22 14"><path d="M4 12c3-5 8-9 13-10-3 5-7 9-13 10z" fill="#444"/></svg>
<svg class="a" style="left:47px;top:422px" width="22" height="22" viewBox="0 0 22 22"><path d="M1 20c1-8 4-14 10-18 5 3 8 10 8 18z" fill="#f2f2f2"/></svg>
<div class="a" style="left:195px;top:212px;width:5px;height:31px;background:#5a5a5a;border-radius:3px"></div>
<div class="a" style="left:0;top:442px;width:194px;height:10px;background:#2c2c2c"></div>
<div class="a" style="left:3px;top:444px;width:188px;height:5px;background:#6a6a6a;border-radius:3px"></div>
<div class="a" style="left:0;top:452px;width:194px;height:21px;background:#363636"></div>
<div class="a" style="left:3px;top:455px;width:16px;height:13px;background:#585858;border-radius:2px"></div>
<div class="a" style="left:22px;top:455px;width:24px;height:13px;background:#585858;border-radius:2px"></div>
<div class="a" style="left:47px;top:455px;width:24px;height:13px;background:#585858;border-radius:2px"></div>
<div class="a" style="left:72px;top:455px;width:19px;height:13px;background:#585858;border-radius:2px"></div>
<svg class="a" style="left:6px;top:457px" width="10" height="10" viewBox="0 0 10 10" stroke="#e8e8e8" stroke-width="1.4"><path d="M5 0v10M0 5h10"/></svg>
<svg class="a" style="left:25px;top:456px" width="20" height="12" viewBox="0 0 20 12"><path d="M2 6l4-2 4 2-4 2zM2 8l4 2 4-2" fill="#111" stroke="#111"/><rect x="6" y="1" width="5" height="5" fill="#3ad070"/><path d="M15 5l2 2 2-2" fill="none" stroke="#a8a8a8" stroke-width="0.8"/></svg>
<svg class="a" style="left:50px;top:456px" width="20" height="12" viewBox="0 0 20 12"><path d="M2 11l3-6 3 6" fill="none" stroke="#aaa" stroke-width="0.9"/><rect x="6" y="1" width="5" height="5" fill="#3ad070"/><path d="M15 5l2 2 2-2" fill="none" stroke="#a8a8a8" stroke-width="0.8"/></svg>
<svg class="a" style="left:76px;top:456px" width="10" height="11" viewBox="0 0 10 11" fill="none" stroke="#aaa" stroke-width="0.9"><path d="M1 2h8M3 2V1h4v1M2 3l1 7h4l1-7"/></svg>
<div class="a" style="left:112px;top:459px;width:87px;height:1px;background:#666"></div>
<svg class="a" style="left:177px;top:454px" width="10" height="11" viewBox="0 0 10 11"><path d="M1 1h8v5l-4 4-4-4z" fill="#e8e8e8"/></svg>
</div>
 <div id="strip" class="a">
<div class="a" style="left:0;top:0;width:1px;height:471px;background:#2a2a2a"></div>
<div class="a" style="left:20px;top:0;width:1px;height:471px;background:#2a2a2a"></div>
<div class="a" style="left:0px;top:2px;width:20px;height:19px;background:#1e1e1e"></div>
<svg class="a" style="left:4px;top:5px" width="12" height="12" viewBox="0 0 12 12" fill="#ececec"><path d="M6 1l5 3-5 3-5-3z"/><path d="M1 6.5l5 3 5-3v1.5l-5 3-5-3z"/></svg>
<svg class="a" style="left:4px;top:26px" width="11" height="11" viewBox="0 0 11 11" fill="none" stroke="#bdbdbd" stroke-width="0.9"><path d="M1 1h9v6H5l-2 3V7H1z"/></svg>
<svg class="a" style="left:4px;top:46px" width="12" height="11" viewBox="0 0 12 11" fill="none" stroke="#bdbdbd" stroke-width="1"><path d="M1 1h5l5 5-4 4-5-5z"/><circle cx="3.5" cy="3.5" r="0.8"/></svg>
<svg class="a" style="left:4px;top:66px" width="11" height="12" viewBox="0 0 11 12" fill="#bdbdbd"><path d="M1 3l6 2-2 1 3 3-1 1-3-3-1 2z"/><text x="7" y="5" font-size="5" font-family="Liberation Sans">?</text></svg>
<div class="a" style="left:9px;top:455px;font-size:10px;color:#d8d8d8;letter-spacing:-1px">•••</div>
</div>
 <div id="palette" class="a">
<div class="a" style="left:4px;top:6px;width:11px;height:10px;background:#fafafa;border-radius:2px"></div>
<svg class="a" style="left:4px;top:6px" width="11" height="10"><path d="M2 9L9 1" stroke="#888" stroke-width="0.8"/></svg>
<div class="a" style="left:4px;top:19.0px;width:11px;height:11.7px;background:#242424"></div>
<div class="a" style="left:4px;top:30.2px;width:11px;height:11.7px;background:#3a3a3a"></div>
<div class="a" style="left:4px;top:41.4px;width:11px;height:11.7px;background:#656565"></div>
<div class="a" style="left:4px;top:52.6px;width:11px;height:11.7px;background:#747474"></div>
<div class="a" style="left:4px;top:63.8px;width:11px;height:11.7px;background:#858585"></div>
<div class="a" style="left:4px;top:75.0px;width:11px;height:11.7px;background:#999999"></div>
<div class="a" style="left:4px;top:86.2px;width:11px;height:11.7px;background:#adadad"></div>
<div class="a" style="left:4px;top:97.4px;width:11px;height:11.7px;background:#c0c0c0"></div>
<div class="a" style="left:4px;top:108.6px;width:11px;height:11.7px;background:#d2d2d2"></div>
<div class="a" style="left:4px;top:119.8px;width:11px;height:11.7px;background:#e4e4e4"></div>
<div class="a" style="left:4px;top:131.0px;width:11px;height:11.7px;background:#f8f8f8"></div>
<div class="a" style="left:4px;top:142.2px;width:11px;height:11.7px;background:#2c2a8c"></div>
<div class="a" style="left:4px;top:153.4px;width:11px;height:11.7px;background:#1aa5e6"></div>
<div class="a" style="left:4px;top:164.6px;width:11px;height:11.7px;background:#15a04c"></div>
<div class="a" style="left:4px;top:175.8px;width:11px;height:11.7px;background:#f5e31a"></div>
<div class="a" style="left:4px;top:187.0px;width:11px;height:11.7px;background:#e51f2c"></div>
<div class="a" style="left:4px;top:198.2px;width:11px;height:11.7px;background:#df2a8a"></div>
<div class="a" style="left:4px;top:209.4px;width:11px;height:11.7px;background:#95428e"></div>
<div class="a" style="left:4px;top:220.6px;width:11px;height:11.7px;background:#f38223"></div>
<div class="a" style="left:4px;top:231.8px;width:11px;height:11.7px;background:#f3aab6"></div>
<div class="a" style="left:4px;top:243.0px;width:11px;height:11.7px;background:#786a65"></div>
<div class="a" style="left:4px;top:254.2px;width:11px;height:11.7px;background:#d3cde8"></div>
<div class="a" style="left:4px;top:265.4px;width:11px;height:11.7px;background:#9d97c9"></div>
<div class="a" style="left:4px;top:276.6px;width:11px;height:11.7px;background:#7089c6"></div>
<div class="a" style="left:4px;top:287.8px;width:11px;height:11.7px;background:#7b62a8"></div>
<div class="a" style="left:4px;top:299.0px;width:11px;height:11.7px;background:#8878a8"></div>
<div class="a" style="left:4px;top:310.2px;width:11px;height:11.7px;background:#4f5f92"></div>
<div class="a" style="left:4px;top:321.4px;width:11px;height:11.7px;background:#544e7a"></div>
<div class="a" style="left:4px;top:332.6px;width:11px;height:11.7px;background:#6b8299"></div>
<div class="a" style="left:4px;top:343.8px;width:11px;height:11.7px;background:#1490dd"></div>
<div class="a" style="left:4px;top:355.0px;width:11px;height:11.7px;background:#a3d7ef"></div>
<div class="a" style="left:4px;top:366.2px;width:11px;height:11.7px;background:#b5c4d0"></div>
<div class="a" style="left:4px;top:377.4px;width:11px;height:11.7px;background:#98a4ac"></div>
<div class="a" style="left:4px;top:388.6px;width:11px;height:11.7px;background:#7b868e"></div>
<div class="a" style="left:4px;top:399.8px;width:11px;height:11.7px;background:#58656e"></div>
<div class="a" style="left:4px;top:411.0px;width:11px;height:11.7px;background:#5e7a79"></div>
<div class="a" style="left:4px;top:422.2px;width:11px;height:11.7px;background:#3f8c84"></div>
<div class="a" style="left:4px;top:433.4px;width:11px;height:11.7px;background:#69a69d"></div>
<div class="a" style="left:4px;top:444.6px;width:11px;height:11.7px;background:#4e9b7e"></div>
<svg class="a" style="left:5px;top:459px" width="9" height="6" viewBox="0 0 9 6"><path d="M1 1l3.5 3.5L8 1" fill="none" stroke="#222" stroke-width="1.2"/></svg>
</div>
</div>
<div class="a" style="left:0;top:569px;width:1000px;height:56px;background:linear-gradient(90deg,#08121f 0%,#0b1829 35%,#0d1c30 65%,#0b192c 100%)"></div>
<div class="a" style="left:274px;top:569px;width:451px;height:60px;background:#0f1114;border:1px solid #5c5c5c;border-radius:4px"></div>
<!-- finder -->
<svg class="a" style="left:282px;top:578px" width="37" height="35" viewBox="0 0 37 35">
 <defs><linearGradient id="fl" x1="0" y1="0" x2="0" y2="1"><stop offset="0" stop-color="#3fb6f7"/><stop offset="1" stop-color="#1a78e0"/></linearGradient></defs>
 <rect x="0" y="0" width="37" height="35" rx="3" fill="#eef2f6"/>
 <path d="M3 0h14c-3 6-4 12-4 19h4c0 6 1 11 2 16H3a3 3 0 0 1-3-3V3a3 3 0 0 1 3-3z" fill="url(#fl)"/>
 <path d="M10 10v4M27 10v4" stroke="#1c2a3a" stroke-width="1.5"/>
 <path d="M7 22c6 5 17 5 23 0" fill="none" stroke="#1c2a3a" stroke-width="1.4"/>
</svg>
<div class="a" style="left:300px;top:620px;width:3px;height:3px;border-radius:50%;background:#9a9a9a"></div>
<!-- siri -->
<svg class="a" style="left:328px;top:576px" width="40" height="40" viewBox="0 0 40 40">
 <defs><radialGradient id="sg" cx="0.5" cy="0.5" r="0.5"><stop offset="0" stop-color="#c8f0ff"/><stop offset="0.35" stop-color="#6a8ad8"/><stop offset="0.7" stop-color="#6a2a8a"/><stop offset="1" stop-color="#2a1a40"/></radialGradient></defs>
 <circle cx="20" cy="20" r="19.5" fill="#e8e8e8"/>
 <circle cx="20" cy="20" r="17.5" fill="url(#sg)"/>
 <g opacity="0.9"><path d="M20 8L22 20L20 32L18 20Z" fill="#e0f8ff"/><path d="M8 20L20 18L32 22L20 22Z" fill="#b8f0ff"/><path d="M11 12L21 19L28 29L19 21Z" fill="#ff8ad8" opacity="0.8"/><path d="M29 11L21 19L11 28L19 21Z" fill="#8af0d0" opacity="0.8"/></g><circle cx="20" cy="20" r="4" fill="#ffffff" opacity="0.8"/>
</svg>
<!-- safari -->
<svg class="a" style="left:375px;top:576px" width="40" height="40" viewBox="0 0 40 40">
 <defs><linearGradient id="sf" x1="0" y1="0" x2="0" y2="1"><stop offset="0" stop-color="#4ab8f5"/><stop offset="1" stop-color="#1b6fd8"/></linearGradient></defs>
 <circle cx="20" cy="20" r="19.5" fill="#f0f0f0"/>
 <circle cx="20" cy="20" r="17.5" fill="url(#sf)"/>
 <path d="M30 9L21.5 21.5 18.5 18.5z" fill="#e83a3a"/><path d="M10 31l8.5-12.5 3 3z" fill="#f4f4f4"/>
</svg>
<!-- pencil -->
<svg class="a" style="left:420px;top:574px" width="45" height="44" viewBox="0 0 45 44">
 <defs><linearGradient id="pg" x1="0" y1="0" x2="0" y2="1"><stop offset="0" stop-color="#5cd33a"/><stop offset="1" stop-color="#2aa21d"/></linearGradient></defs>
 <path d="M10 0h35v34a10 10 0 0 1-10 10H10A10 10 0 0 1 0 34V10A10 10 0 0 1 10 0z" fill="url(#pg)"/>
 <path d="M9 11l5-5 22 22 2 7-7-2z" fill="#eef4ea" stroke="#a0b8a0" stroke-width="0.6"/>
 <path d="M10 12l4-4" stroke="#888" stroke-width="1"/>
</svg>
<div class="a" style="left:441px;top:620px;width:3px;height:3px;border-radius:50%;background:#9a9a9a"></div>
<!-- red -->
<svg class="a" style="left:467px;top:574px" width="41" height="44" viewBox="0 0 41 44">
 <path d="M10 0h31v34a10 10 0 0 1-10 10H10A10 10 0 0 1 0 34V10A10 10 0 0 1 10 0z" fill="#c21f2c"/>
 <circle cx="21" cy="23" r="11" fill="#e8e8e8"/><circle cx="21" cy="23" r="6" fill="#b8b8b8"/><circle cx="21" cy="21.5" r="2.4" fill="#8a8a8a"/>
 <circle cx="34" cy="9" r="2.3" fill="#f0f0f0"/>
</svg>
<!-- f -->
<svg class="a" style="left:514px;top:573px" width="45" height="45" viewBox="0 0 45 45">
 <defs><linearGradient id="fg" x1="0" y1="0" x2="0" y2="1"><stop offset="0" stop-color="#39a8e0"/><stop offset="1" stop-color="#1776b8"/></linearGradient></defs>
 <path d="M10 0h35v35a10 10 0 0 1-10 10H10A10 10 0 0 1 0 35V10A10 10 0 0 1 10 0z" fill="url(#fg)"/>
 <text x="14" y="36" font-family="Liberation Serif" font-weight="bold" font-size="34" fill="#f4f4f4">f</text>
</svg>
<!-- rocket -->
<svg class="a" style="left:564px;top:576px" width="40" height="40" viewBox="0 0 40 40">
 <defs><linearGradient id="rg" x1="0" y1="0" x2="0" y2="1"><stop offset="0" stop-color="#e2e2e2"/><stop offset="1" stop-color="#9a9a9a"/></linearGradient></defs>
 <circle cx="20" cy="20" r="19.5" fill="url(#rg)"/>
 <path d="M30 8c-6 1-11 5-14 11l-4 1 -3 4 5 1 1 5 4-3 1-4c6-3 10-8 10-15z" fill="#4a4a4a"/>
 <circle cx="24" cy="15" r="2" fill="#c8c8c8"/>
</svg>
<!-- settings -->
<svg class="a" style="left:612px;top:577px" width="39" height="37" viewBox="0 0 39 37">
 <rect x="0" y="0" width="39" height="37" rx="3" fill="#b8b8b8"/>
 <circle cx="19.5" cy="18.5" r="15" fill="#3e3e3e"/>
 <circle cx="19.5" cy="18.5" r="12.5" fill="none" stroke="#9a9a9a" stroke-width="2.5" stroke-dasharray="2 1.6"/>
 <circle cx="19.5" cy="18.5" r="9" fill="#6a6a6a"/>
 <path d="M19.5 18.5v-9M19.5 18.5l8 4.5M19.5 18.5l-8 4.5" stroke="#2a2a2a" stroke-width="2.4"/>
 <circle cx="19.5" cy="18.5" r="2.5" fill="#444"/>
</svg>
<div class="a" style="left:665px;top:576px;width:1px;height:39px;background:#3a3a3a"></div>
<!-- trash -->
<svg class="a" style="left:683px;top:576px" width="33" height="40" viewBox="0 0 33 40">
 <ellipse cx="16.5" cy="3.5" rx="16" ry="3.2" fill="#8a8a8a"/>
 <path d="M0.5 3.5l3 33c0 2 6 3 13 3s13-1 13-3l3-33c0 2-7 3.5-16 3.5S0.5 5.5 0.5 3.5z" fill="#6e6e6e"/>
</svg>
</body></html>
